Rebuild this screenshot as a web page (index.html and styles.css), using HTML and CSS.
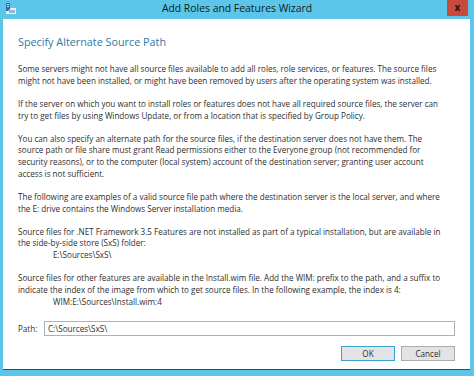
FILE: index.html
```html
<!DOCTYPE html>
<html>
<head>
<meta charset="utf-8">
<link rel="stylesheet" href="styles.css">
</head>
<body>
<div class="window">
  <div class="titlebar">
    <svg class="app-icon" width="12" height="12" viewBox="0 0 12 12">
      <rect x="1" y="0" width="4" height="8" fill="#2a6fb8"/>
      <rect x="2" y="1" width="2" height="1" fill="#bfe3f7"/>
      <rect x="2" y="3" width="2" height="1" fill="#bfe3f7"/>
      <path d="M3 8 L6 5 L11 5 L11 11 L1 11 L1 8 Z" fill="#e8f1f8"/>
      <rect x="4" y="7" width="6" height="3" fill="#9fb3c4"/>
    </svg>
    <div class="title">Add Roles and Features Wizard</div>
    <div class="close">x</div>
  </div>
  <div class="content">
    <h1 class="heading">Specify Alternate Source Path</h1>
    <p class="para first">Some servers might not have all source files available to add all roles, role services, or features. The source files<br>might not have been installed, or might have been removed by users after the operating system was installed.</p>
    <p class="para">If the server on which you want to install roles or features does not have all required source files, the server can<br>try to get files by using Windows Update, or from a location that is specified by Group Policy.</p>
    <p class="para">You can also specify an alternate path for the source files, if the destination server does not have them. The<br>source path or file share must grant Read permissions either to the Everyone group (not recommended for<br>security reasons), or to the computer (local system) account of the destination server; granting user account<br>access is not sufficient.</p>
    <p class="para">The following are examples of a valid source file path where the destination server is the local server, and where<br>the E: drive contains the Windows Server installation media.</p>
    <p class="para">Source files for .NET Framework 3.5 Features are not installed as part of a typical installation, but are available in<br>the side-by-side store (SxS) folder:<br><span class="indent">E:\Sources\SxS\</span></p>
    <p class="para">Source files for other features are available in the Install.wim file. Add the WIM: prefix to the path, and a suffix to<br>indicate the index of the image from which to get source files. In the following example, the index is 4:<br><span class="indent">WIM:E:\Sources\Install.wim:4</span></p>
    <div class="path-row">
      <span class="path-label">Path:</span>
      <div class="path-input">C:\Sources\SxS\</div>
    </div>
    <div class="buttons">
      <div class="btn btn-default">OK</div>
      <div class="btn">Cancel</div>
    </div>
  </div>
</div>
</body>
</html>
```
FILE: styles.css
```css
html, body {
  margin: 0;
  padding: 0;
}
body {
  width: 474px;
  height: 376px;
  background: #5bc6ea;
  font-family: "Open Sans", "Noto Sans", sans-serif;
  overflow: hidden;
}
.window {
  display: flex;
  flex-direction: column;
  height: 376px;
}
.titlebar {
  height: 19px;
  position: relative;
  display: flex;
  align-items: center;
  justify-content: center;
}
.app-icon {
  position: absolute;
  left: 5px;
  top: 3px;
}
.title {
  font-size: 10.4px;
  color: #101a20;
  margin-top: -3px;
}
.close {
  position: absolute;
  right: 6px;
  top: 0;
  width: 21px;
  height: 16px;
  background: #c84a3c;
  color: #2a1010;
  font-weight: bold;
  font-size: 10px;
  line-height: 14px;
  text-align: center;
}
.content {
  margin: 0 4px 0 3px;
  height: 351px;
  background: #fff;
  border-bottom: 1px solid #3b4a55;
  padding: 0 15px;
  box-sizing: border-box;
}
.heading {
  margin: 15px 0 0 0;
  font-weight: normal;
  font-size: 10.8px;
  line-height: 16px;
  color: #2a7aa6;
}
.para {
  margin: 11.4px 0 0 0;
  font-size: 8.1px;
  line-height: 11.7px;
  color: #2e2e2e;
  white-space: nowrap;
}
.para.first {
  margin-top: 13px;
}
.indent {
  padding-left: 35px;
}
.path-row {
  display: flex;
  align-items: center;
  margin-top: 14px;
  font-size: 8.1px;
  color: #2e2e2e;
}
.path-label {
  width: 26px;
}
.path-input {
  width: 411px;
  height: 15px;
  box-sizing: border-box;
  border: 1px solid #aab2b8;
  padding-left: 3px;
  line-height: 13px;
}
.buttons {
  display: flex;
  justify-content: flex-end;
  gap: 6px;
  margin-top: 10px;
}
.btn {
  width: 54px;
  height: 15px;
  box-sizing: border-box;
  border: 1px solid #acacac;
  background: #e3e3e3;
  font-size: 8.1px;
  line-height: 13px;
  text-align: center;
  color: #2e2e2e;
}
.btn-default {
  border-color: #3c9fd6;
}
```
